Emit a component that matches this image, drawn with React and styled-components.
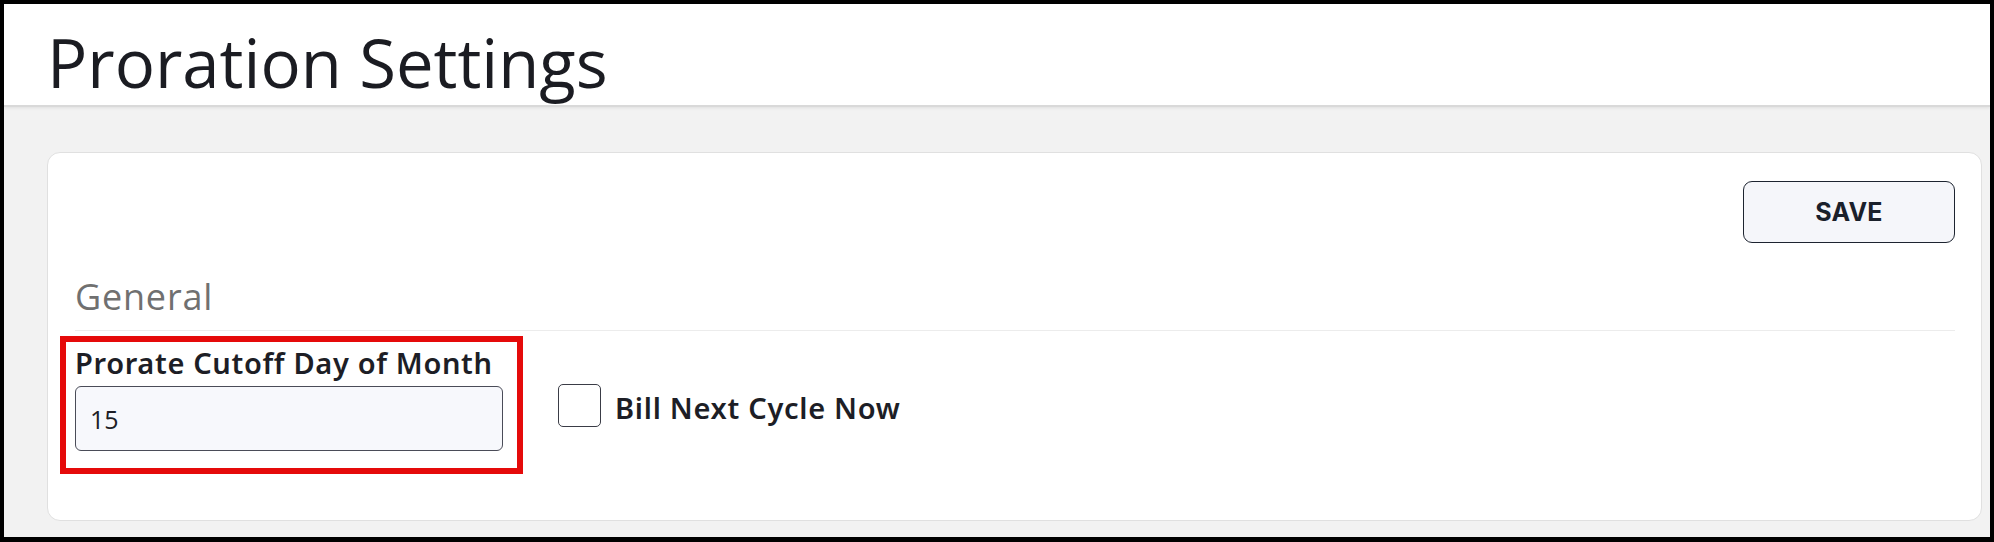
import React from 'react';
import styled, { createGlobalStyle } from 'styled-components';

const GlobalStyle = createGlobalStyle`
  html, body {
    margin: 0;
    padding: 0;
    background: #000;
  }
  * {
    box-sizing: border-box;
  }
`;

const Frame = styled.div`
  width: 1994px;
  height: 542px;
  border-style: solid;
  border-color: #000;
  border-width: 4px 4px 5px 4px;
  background: #f2f2f2;
  display: flex;
  flex-direction: column;
  overflow: hidden;
`;

const Header = styled.header`
  height: 103px;
  flex-shrink: 0;
  background: #fff;
  border-bottom: 2px solid #d9d9d9;
  box-shadow: 0 1px 3px rgba(0, 0, 0, 0.08);
  padding: 25px 0 0 43px;
`;

const Title = styled.h1`
  margin: 0;
  font-family: 'Open Sans', 'Noto Sans', sans-serif;
  font-weight: 400;
  font-size: 67px;
  line-height: 1;
  color: #1b1c22;
`;

const Body = styled.main`
  flex: 1;
  padding: 45px 8px 16px 43px;
  display: flex;
  flex-direction: column;
`;

const Card = styled.section`
  flex: 1;
  background: #fff;
  border: 1.5px solid #e0e0e0;
  border-radius: 13px;
  padding: 28px 26px 0 27px;
  display: flex;
  flex-direction: column;
`;

const Toolbar = styled.div`
  display: flex;
  justify-content: flex-end;
`;

const SaveButton = styled.button`
  width: 212px;
  height: 62px;
  border: 1.5px solid #1d2430;
  border-radius: 9px;
  background: #f5f6fa;
  color: #1a202b;
  font-family: Inter, 'Liberation Sans', sans-serif;
  font-weight: 700;
  font-size: 25px;
  letter-spacing: 0.3px;
  cursor: pointer;
`;

const SectionTitle = styled.h2`
  margin: 31px 0 0 0;
  font-family: 'Open Sans', 'Noto Sans', sans-serif;
  font-weight: 400;
  font-size: 36px;
  line-height: 46px;
  color: #707070;
  letter-spacing: 0.8px;
`;

const Divider = styled.hr`
  margin: 10px 0 0 0;
  border: none;
  border-top: 1.5px solid #ececec;
`;

const FieldRow = styled.div`
  margin-top: 5px;
  display: flex;
  align-items: center;
  gap: 35px;
`;

const Highlight = styled.div`
  margin-left: -15px;
  border: 6px solid #e50a0a;
  padding: 6px 14px 17px 9px;
  display: flex;
  flex-direction: column;
  gap: 8px;
`;

const Label = styled.label`
  font-family: 'Noto Sans', 'Open Sans', sans-serif;
  font-weight: 600;
  font-size: 29px;
  line-height: 30px;
  color: #1d1e26;
  letter-spacing: 0.65px;
`;

const TextInput = styled.input`
  width: 428px;
  height: 65px;
  border: 1.5px solid #4a4c58;
  border-radius: 6px;
  background: #f7f8fc;
  padding: 0 14px;
  font-family: 'Open Sans', 'Noto Sans', sans-serif;
  font-size: 25px;
  color: #1d1e26;
  outline: none;
`;

const CheckLabel = styled.label`
  display: flex;
  align-items: center;
  gap: 14px;
  font-family: 'Noto Sans', 'Open Sans', sans-serif;
  font-weight: 600;
  font-size: 29px;
  color: #1d1e26;
  letter-spacing: 0.7px;
  cursor: pointer;
`;

const CheckText = styled.span`
  padding-top: 5px;
`;

const Box = styled.span`
  width: 43px;
  height: 43px;
  border: 1.5px solid #3a3c46;
  border-radius: 5px;
  background: #fff;
`;

export default function App() {
  return (
    <>
      <GlobalStyle />
      <Frame>
        <Header>
          <Title>Proration Settings</Title>
        </Header>
        <Body>
          <Card>
            <Toolbar>
              <SaveButton type="button">SAVE</SaveButton>
            </Toolbar>
            <SectionTitle>General</SectionTitle>
            <Divider />
            <FieldRow>
              <Highlight>
                <Label htmlFor="cutoff">Prorate Cutoff Day of Month</Label>
                <TextInput id="cutoff" defaultValue="15" />
              </Highlight>
              <CheckLabel>
                <Box />
                <CheckText>Bill Next Cycle Now</CheckText>
              </CheckLabel>
            </FieldRow>
          </Card>
        </Body>
      </Frame>
    </>
  );
}
